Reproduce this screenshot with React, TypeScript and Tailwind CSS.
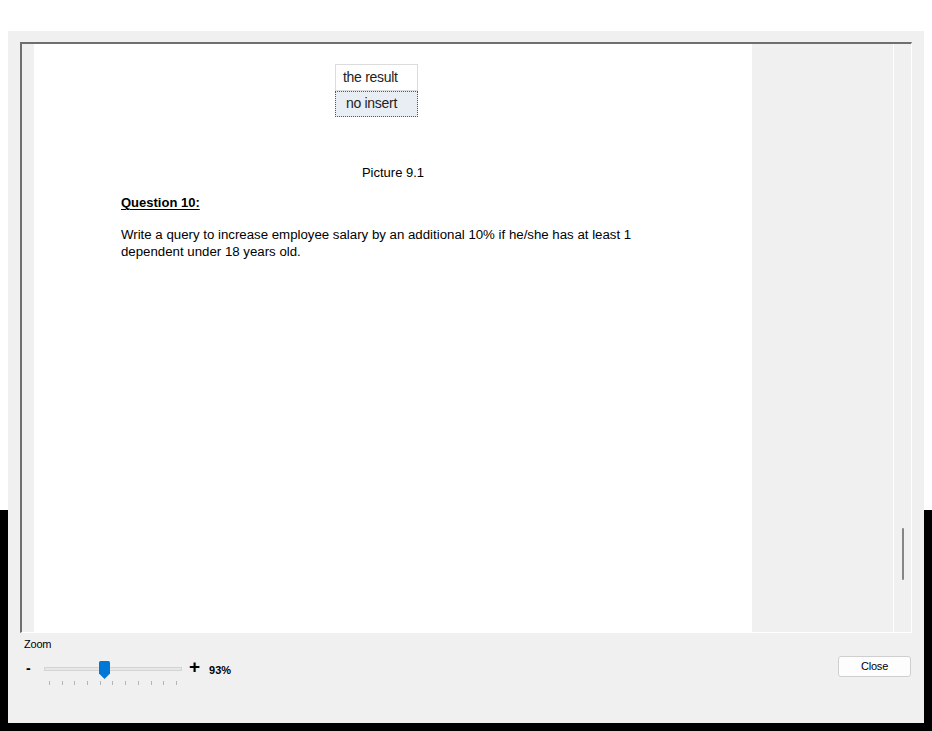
const ticks = [0, 1, 2, 3, 4, 5, 6, 7, 8, 9, 10];

const SideStrip = () => (
  <div className="w-[8px] flex flex-col">
    <div className="h-[479px] bg-white" />
    <div className="flex-1 bg-black" />
  </div>
);

const SliderThumb = () => (
  <svg width="11" height="18" viewBox="0 0 11 18" className="block">
    <path d="M1.5 0 H9.5 Q11 0 11 1.5 V12.5 L5.5 18 L0 12.5 V1.5 Q0 0 1.5 0 Z" fill="#0078d7" />
  </svg>
);

const PreviewPage = () => {
  return (
    <div className="w-[718px] bg-white text-black font-['Liberation_Sans',_Arial,_sans-serif]">
      {/* result table from the picture */}
      <div className="ml-[301px] mt-[20px] w-[83px]">
        <div className="h-[27px] border border-[#dcdcdc] pl-[7px] text-[14px] leading-[25px] tracking-[-0.3px] text-[#222]">
          the result
        </div>
        <div className="h-[26px] border border-dotted border-[#555] bg-[#e9eef4] pl-[10px] text-[14px] leading-[22px] tracking-[-0.3px] text-[#222]">
          no insert
        </div>
      </div>

      <p className="mt-[48px] text-center text-[13px] leading-[16px]">Picture 9.1</p>

      <div className="pl-[87px]">
        <h4 className="mt-[14px] text-[13px] leading-[16px] font-bold underline underline-offset-2">
          Question 10:
        </h4>
        <p className="mt-[15px] w-[560px] text-[13.25px] leading-[17px]">
          Write a query to increase employee salary by an additional 10% if he/she has at least 1
          <br />
          dependent under 18 years old.
        </p>
      </div>
    </div>
  );
};

export default function App() {
  return (
    <div className="w-[932px] h-[731px] flex flex-col bg-white font-['Liberation_Sans',_Arial,_sans-serif]">
      <div className="h-[31px] bg-white" />

      <div className="h-[692px] flex">
        <SideStrip />

        {/* ================= PRINT PREVIEW WINDOW ================= */}
        <div className="w-[916px] bg-[#f0f0f0] flex flex-col">
          <div className="ml-[12px] mt-[11px] w-[892px] h-[591px] flex border-t-2 border-l-2 border-t-[#6f6f6f] border-l-[#6f6f6f] border-b border-r border-b-white border-r-white">
            <div className="w-[12px] bg-[#f0f0f0]" />
            <PreviewPage />
            <div className="w-[141px] bg-[#f0f0f0]" />
            <div className="w-[1px] bg-white" />
            <div className="w-[17px] bg-[#f0f0f0] flex flex-col items-center pt-[484px]">
              <div className="w-[2px] h-[52px] bg-[#858585] rounded-full" />
            </div>
          </div>

          {/* bottom controls */}
          <div className="flex-1 flex justify-between">
            <div className="pl-[16px] pt-[4px] flex flex-col">
              <span className="text-[11px] leading-[14px] text-black tracking-[-0.2px]">Zoom</span>
              <div className="mt-[10px] flex items-start">
                <span className="w-[20px] pl-[2px] text-[14px] leading-[14px] font-bold text-black">-</span>
                <div className="w-[138px] flex flex-col">
                  <div className="relative h-[18px]">
                    <div className="absolute left-0 right-0 top-[6px] h-[4px] bg-[#e7e7e7] border border-[#d4d4d4]" />
                    <div className="absolute left-[55px] top-0">
                      <SliderThumb />
                    </div>
                  </div>
                  <div className="mt-[2px] pl-[5px] flex gap-[11.7px]">
                    {ticks.map((t) => (
                      <div key={t} className="w-[1px] h-[4px] bg-[#b5b5b5]" />
                    ))}
                  </div>
                </div>
                <span className="ml-[7px] -mt-[4px] text-[19px] leading-[20px] font-bold text-black">+</span>
                <span className="ml-[9px] mt-[2px] text-[11px] leading-[14px] font-bold text-black">93%</span>
              </div>
            </div>

            <div className="pt-[20px] pr-[13px]">
              <button className="w-[73px] h-[21px] rounded-[3px] border border-[#cfcfcf] bg-[#fdfdfd] text-[11px] leading-[19px] text-black tracking-[-0.2px]">
                Close
              </button>
            </div>
          </div>
        </div>

        <SideStrip />
      </div>

      <div className="h-[8px] bg-black" />
    </div>
  );
}
